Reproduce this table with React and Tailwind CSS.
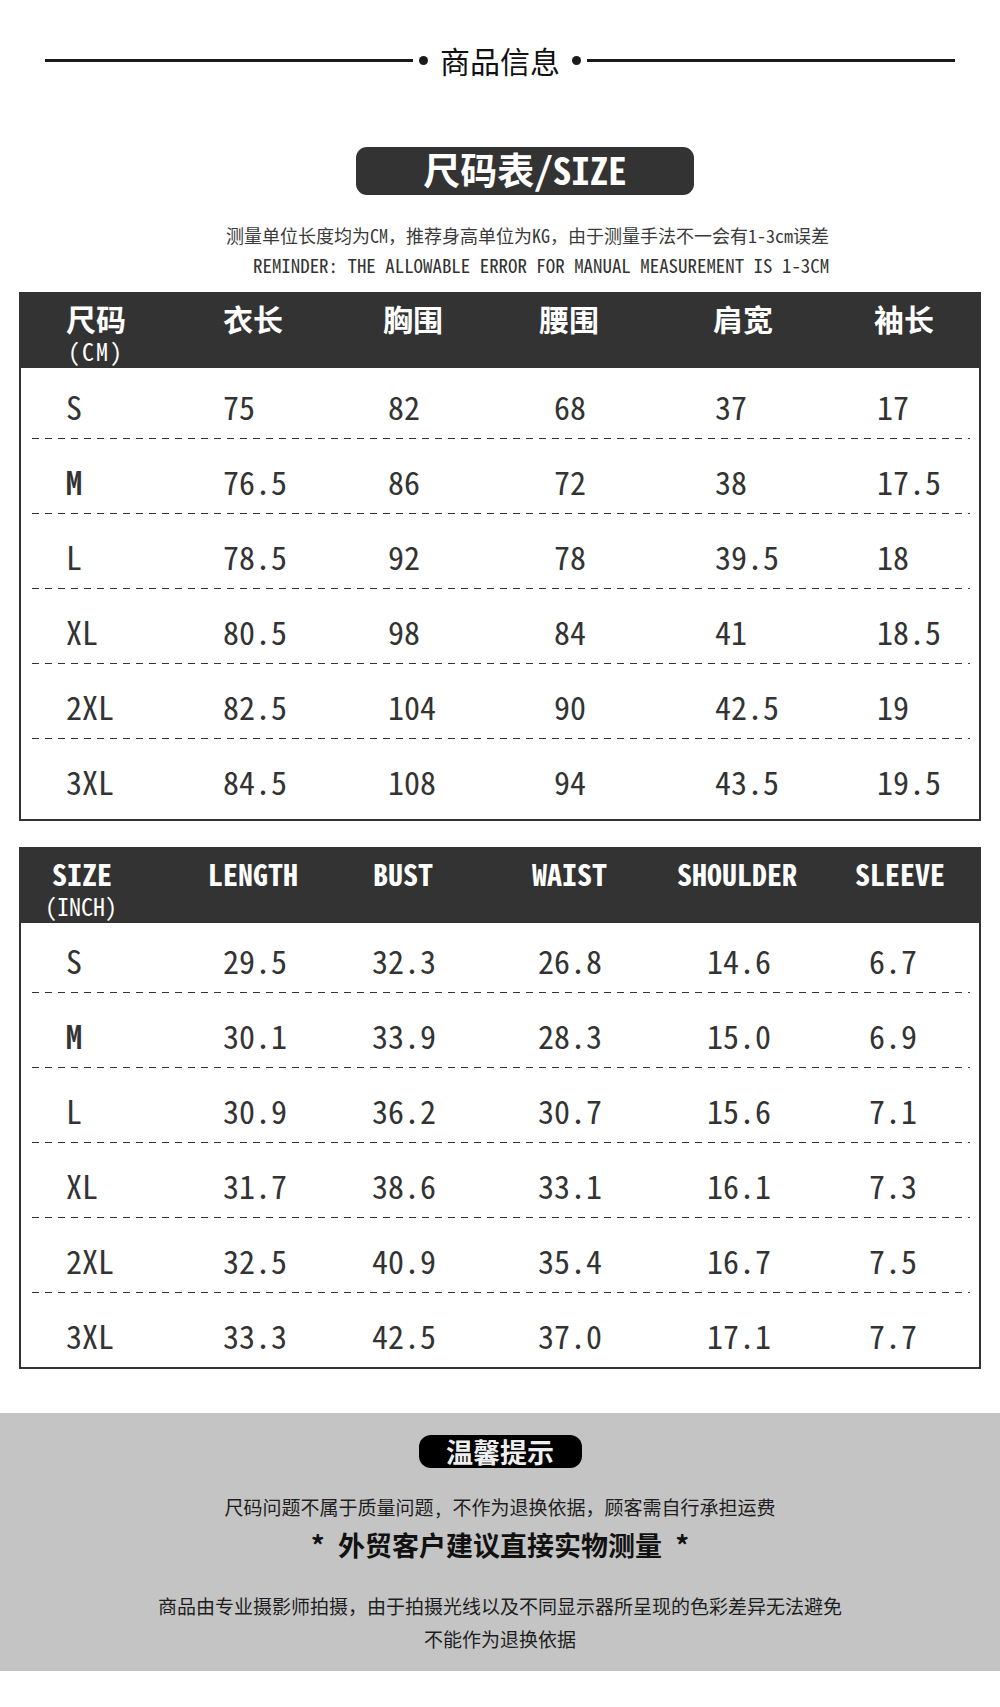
import React from "react";

const FONT = "font-['Noto_Sans_Mono_CJK_SC','Noto_Sans_CJK_SC',monospace]";

const cmHead = ["尺码", "衣长", "胸围", "腰围", "肩宽", "袖长"];
const cmRows = [
  ["S", "75", "82", "68", "37", "17"],
  ["M", "76.5", "86", "72", "38", "17.5"],
  ["L", "78.5", "92", "78", "39.5", "18"],
  ["XL", "80.5", "98", "84", "41", "18.5"],
  ["2XL", "82.5", "104", "90", "42.5", "19"],
  ["3XL", "84.5", "108", "94", "43.5", "19.5"],
];
const inHead = ["SIZE", "LENGTH", "BUST", "WAIST", "SHOULDER", "SLEEVE"];
const inRows = [
  ["S", "29.5", "32.3", "26.8", "14.6", "6.7"],
  ["M", "30.1", "33.9", "28.3", "15.0", "6.9"],
  ["L", "30.9", "36.2", "30.7", "15.6", "7.1"],
  ["XL", "31.7", "38.6", "33.1", "16.1", "7.3"],
  ["2XL", "32.5", "40.9", "35.4", "16.7", "7.5"],
  ["3XL", "33.3", "42.5", "37.0", "17.1", "7.7"],
];

function Dash() {
  return (
    <div className="ml-[11px] mr-[9px] h-px bg-[repeating-linear-gradient(90deg,#333_0px,#333_7px,transparent_7px,transparent_13px)]" />
  );
}

function Body({ rows, gridCls, pt, pb }) {
  return (
    <div className={`${pt} ${pb}`}>
      {rows.map((r, i) => (
        <div key={i}>
          {i > 0 && <Dash />}
          <div className={i > 0 ? "pt-[14px]" : ""}>
            <div className={`grid ${gridCls} h-[60px] items-center pb-[4px] pl-[45px] text-[32px] leading-none text-[#333]`}>
              {r.map((c, j) => (
                <div key={j} className={r[0] === "M" && j === 0 ? "font-bold" : ""}>
                  {c}
                </div>
              ))}
            </div>
          </div>
        </div>
      ))}
    </div>
  );
}

export default function App() {
  return (
    <div className={`w-[1000px] min-h-[1707px] bg-white ${FONT}`}>
      {/* top divider */}
      <div className="pt-[40px] px-[45px]">
        <div className="flex h-[40px] items-center">
          <div className="h-[3px] flex-1 bg-[#1a1a1a]" />
          <div className="ml-[6px] h-[9px] w-[9px] rounded-full bg-[#1a1a1a]" />
          <div className="mx-[12px] text-[30px] leading-none text-[#111] font-['Noto_Sans_CJK_SC',sans-serif]">
            商品信息
          </div>
          <div className="mr-[6px] h-[9px] w-[9px] rounded-full bg-[#1a1a1a]" />
          <div className="h-[3px] flex-1 bg-[#1a1a1a]" />
        </div>
      </div>

      {/* title pill */}
      <div className="mt-[67px] flex justify-center">
        <div className="ml-[50px] flex h-[48px] w-[338px] items-center justify-center rounded-[11px] bg-[#333] pb-[3px]">
          <span className="text-[37px] font-bold leading-none text-white">尺码表/SIZE</span>
        </div>
      </div>

      {/* notes */}
      <div className="mt-[31px] pl-[226px] text-[18px] leading-none text-[#3a3a3a]">
        测量单位长度均为CM，推荐身高单位为KG，由于测量手法不一会有1-3cm误差
      </div>
      <div className="mt-[12px] pl-[253px] text-[18.9px] leading-none text-[#333]">
        REMINDER: THE ALLOWABLE ERROR FOR MANUAL MEASUREMENT IS 1-3CM
      </div>

      {/* CM table */}
      <div className="ml-[19px] mt-[17px] w-[962px] border-2 border-[#333]">
        <div className="h-[74px] bg-[#333] pt-[9px] text-white">
          <div className="grid grid-cols-[157px_160px_156px_174px_161px_1fr] items-start pl-[45px]">
            <div>
              <div className="text-[30px] font-bold leading-none">尺码</div>
              <div className="mt-[6px] ml-[2px] text-[24px] leading-none tracking-[2px]">(CM)</div>
            </div>
            {cmHead.slice(1).map((h) => (
              <div key={h} className="text-[30px] font-bold leading-none">
                {h}
              </div>
            ))}
          </div>
        </div>
        <Body rows={cmRows} gridCls="grid-cols-[157px_165px_166px_161px_162px_1fr]" pt="pt-[10px]" pb="pb-[6px]" />
      </div>

      {/* INCH table */}
      <div className="ml-[19px] mt-[26px] w-[962px] border-2 border-[#333]">
        <div className="h-[74px] bg-[#333] pt-[9px] text-white">
          <div className="grid grid-cols-[157px_165px_159px_145px_178px_1fr] items-start pl-[30px]">
            <div>
              <div className="pl-[1px] text-[30px] font-bold leading-none">SIZE</div>
              <div className="mt-[6px] -ml-[6px] text-[24px] leading-none">(INCH)</div>
            </div>
            {inHead.slice(1).map((h) => (
              <div key={h} className="text-[30px] font-bold leading-none">
                {h}
              </div>
            ))}
          </div>
        </div>
        <Body rows={inRows} gridCls="grid-cols-[157px_149px_166px_169px_162px_1fr]" pt="pt-[9px]" pb="pb-0" />
      </div>

      {/* tips */}
      <div className="mt-[44px] h-[258px] bg-[#c4c4c4] pt-[22px] text-center text-[#1e1e1e]">
        <div className="flex justify-center">
          <div className="flex h-[33px] w-[163px] items-center justify-center rounded-[12px] bg-black">
            <span className="text-[27px] font-bold leading-none text-[#eeeeee]">温馨提示</span>
          </div>
        </div>
        <div className="mt-[29px] text-[19px] leading-none">尺码问题不属于质量问题, 不作为退换依据，顾客需自行承担运费</div>
        <div className="mt-[15px] text-[27px] font-bold leading-none text-[#111]">* 外贸客户建议直接实物测量 *</div>
        <div className="mt-[38px] text-[19px] leading-none">商品由专业摄影师拍摄，由于拍摄光线以及不同显示器所呈现的色彩差异无法避免</div>
        <div className="mt-[14px] text-[19px] leading-none">不能作为退换依据</div>
      </div>
    </div>
  );
}
